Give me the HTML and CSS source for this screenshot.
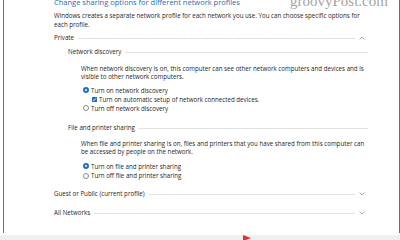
FILE: index.html
```html
<!DOCTYPE html>
<html lang="en">
<head>
    <meta charset="UTF-8">
    <title>Advanced sharing settings</title>
    <link rel="stylesheet" href="styles.css">
</head>
<body>
    <div class="screen">
        <div class="frame">
            <div class="panel">
                <h1 class="title">Change sharing options for different network profiles</h1>
                <p class="intro">Windows creates a separate network profile for each network you use. You can choose specific options for<br>each profile.</p>

                <div class="head">
                    <span>Private</span>
                    <span class="rule"></span>
                    <svg class="chev" viewBox="0 0 6 4"><path d="M0.5 3.5 L3 1 L5.5 3.5" /></svg>
                </div>

                <div class="group">
                    <div class="subHead first"><span>Network discovery</span><span class="rule"></span></div>
                    <p class="para">When network discovery is on, this computer can see other network computers and devices and is<br>visible to other network computers.</p>
                    <div class="options">
                        <div class="opt"><span class="radio on"></span>Turn on network discovery</div>
                        <div class="opt sub"><span class="check"><svg viewBox="0 0 6 6"><path d="M1.2 3.1 L2.5 4.3 L4.9 1.6" /></svg></span>Turn on automatic setup of network connected devices.</div>
                        <div class="opt"><span class="radio"></span>Turn off network discovery</div>
                    </div>

                    <div class="subHead second"><span>File and printer sharing</span><span class="rule"></span></div>
                    <p class="para para2">When file and printer sharing is on, files and printers that you have shared from this computer can<br>be accessed by people on the network.</p>
                    <div class="options options2">
                        <div class="opt"><span class="radio on"></span>Turn on file and printer sharing</div>
                        <div class="opt"><span class="radio"></span>Turn off file and printer sharing</div>
                    </div>
                </div>

                <div class="head guest">
                    <span>Guest or Public (current profile)</span>
                    <span class="rule"></span>
                    <svg class="chev" viewBox="0 0 6 4"><path d="M0.5 0.5 L3 3 L5.5 0.5" /></svg>
                </div>
                <div class="head all">
                    <span>All Networks</span>
                    <span class="rule"></span>
                    <svg class="chev" viewBox="0 0 6 4"><path d="M0.5 0.5 L3 3 L5.5 0.5" /></svg>
                </div>
            </div>
        </div>
        <div class="statusbar"><span class="marker"></span></div>
        <div class="watermark">groovyPost.com</div>
    </div>
</body>
</html>
```

FILE: styles.css
```css
html, body {
  margin: 0;
  padding: 0;
  background: #fff;
}

.screen {
  position: relative;
  width: 400px;
  height: 240px;
  overflow: hidden;
  font-family: "Open Sans", "Noto Sans", sans-serif;
  font-size: 6.2px;
  color: #262626;
}

.frame {
  margin-left: 3px;
  width: 395px;
  height: 233px;
  border-left: 1px solid #6e6e6e;
  border-right: 1px solid #6e6e6e;
  overflow: hidden;
}

.panel {
  padding-left: 50px;
  width: 314px;
}

/* heading is partly scrolled out of view */
.title {
  margin: -3px 0 0;
  font-size: 7.5px;
  font-weight: 400;
  line-height: 10px;
  color: #2c6ab3;
  white-space: nowrap;
}

.intro {
  margin: 4px 0 0;
  line-height: 9px;
  white-space: nowrap;
}

.head, .subHead {
  display: flex;
  align-items: center;
  height: 10px;
  line-height: 10px;
  white-space: nowrap;
}

.head {
  margin-top: 4px;
}

.rule {
  flex: 1;
  height: 1px;
  margin-left: 4px;
  background: #e2e2e2;
}

.chev {
  width: 6px;
  height: 4px;
  margin-left: 4px;
  margin-right: 3px;
  fill: none;
  stroke: #9a9a9a;
  stroke-width: 0.8;
}

.group {
  padding-left: 14px;
}

.subHead.first {
  margin-top: 4px;
}

.subHead.second {
  margin-top: 10.5px;
}

.para {
  margin: 8px 0 0;
  padding-left: 13px;
  line-height: 8px;
  white-space: nowrap;
}

.para2 {
  margin-top: 7px;
}

.options {
  margin-top: 4.5px;
  padding-left: 15px;
}

.options2 {
  margin-top: 5.5px;
}

.opt {
  display: flex;
  align-items: center;
  height: 9px;
  line-height: 9px;
  white-space: nowrap;
}

.options2 .opt {
  height: 9.5px;
}

.opt.sub {
  padding-left: 9px;
}

.radio {
  box-sizing: border-box;
  width: 6px;
  height: 6px;
  margin-right: 2px;
  border: 1px solid #8a8a8a;
  border-radius: 50%;
  background: #fff;
}

.radio.on {
  border: 2px solid #1f6fc0;
}

.check {
  display: flex;
  width: 5px;
  height: 5px;
  margin-right: 2px;
  background: #1f6fc0;
}

.check svg {
  width: 5px;
  height: 5px;
  fill: none;
  stroke: #fff;
  stroke-width: 1;
}

.head.guest {
  margin-top: 8.5px;
}

.head.all {
  margin-top: 9px;
}

.statusbar {
  height: 7px;
  padding-left: 243px;
  background: #f0f0f0;
}

.marker {
  display: block;
  width: 0;
  height: 0;
  margin-top: 2px;
  border-top: 3px solid transparent;
  border-bottom: 3px solid transparent;
  border-left: 8px solid #e53030;
}

.watermark {
  position: absolute;
  top: -7px;
  left: 290px;
  font-family: "Liberation Serif", serif;
  font-size: 15px;
  color: #a4a4a4;
}
```
